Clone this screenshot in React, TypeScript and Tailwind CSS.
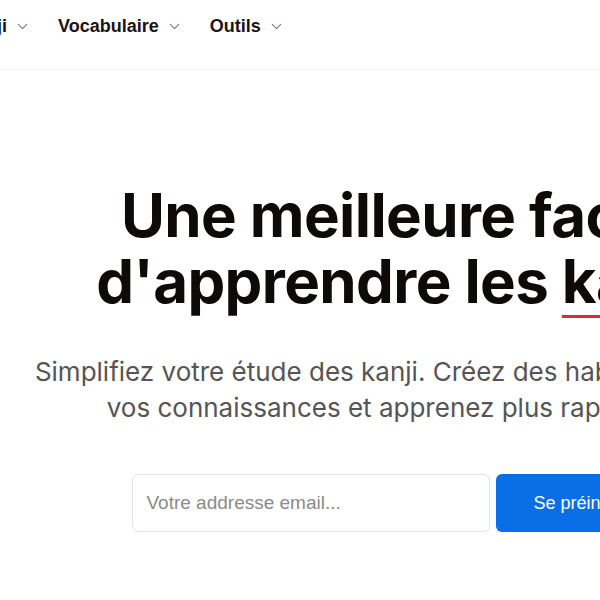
import React from "react";
import { ChevronDown } from "lucide-react";

const navItems = ["Kanji", "Vocabulaire", "Outils"];

const App: React.FC = () => {
  return (
    <div className="w-[600px] h-[600px] overflow-hidden bg-white font-['Inter',sans-serif]">
      <div className="w-[814px]">
        <header className="h-[70px] border-b border-[#f1f1f1]">
          <nav className="h-[53px] flex items-center -ml-[37px] gap-[27px] font-['Liberation_Sans',Arial,sans-serif]">
            {navItems.map((item) => (
              <div key={item} className="flex items-center gap-[7px] text-[18px] font-bold text-[#1a1414]">
                <span>{item}</span>
                <ChevronDown size={17} strokeWidth={1.5} className="text-[#777]" />
              </div>
            ))}
          </nav>
        </header>

        <section className="pt-[112px] flex flex-col items-center text-center">
          <h1 className="text-[60px] leading-[66px] font-bold text-[#0f0a0a] tracking-[-0.6px]">
            Une meilleure façon
            <br />
            d'apprendre les{" "}
            <span className="underline decoration-[#dc2c2c] decoration-[3px] underline-offset-[12px]">
              kanji
            </span>
            .
          </h1>

          <p className="mt-10 text-[26px] leading-[36px] text-[#555] w-[800px]">
            Simplifiez votre étude des kanji. Créez des habitudes, suivez
            <br />
            vos connaissances et apprenez plus rapidement.
          </p>

          <form className="mt-12 flex gap-[6px] font-['Liberation_Sans',Arial,sans-serif]" onSubmit={(e) => e.preventDefault()}>
            <input
              type="email"
              placeholder="Votre addresse email..."
              className="w-[358px] h-[58px] rounded-[6px] border border-[#e4e4e4] px-[13px] text-[19px] placeholder:text-[#8a8a8a] outline-none"
            />
            <button
              type="submit"
              className="h-[58px] px-[37px] rounded-[6px] bg-[#0a6fe6] text-white text-[18px]"
            >
              Se préinscrire
            </button>
          </form>
        </section>
      </div>
    </div>
  );
};

export default App;
